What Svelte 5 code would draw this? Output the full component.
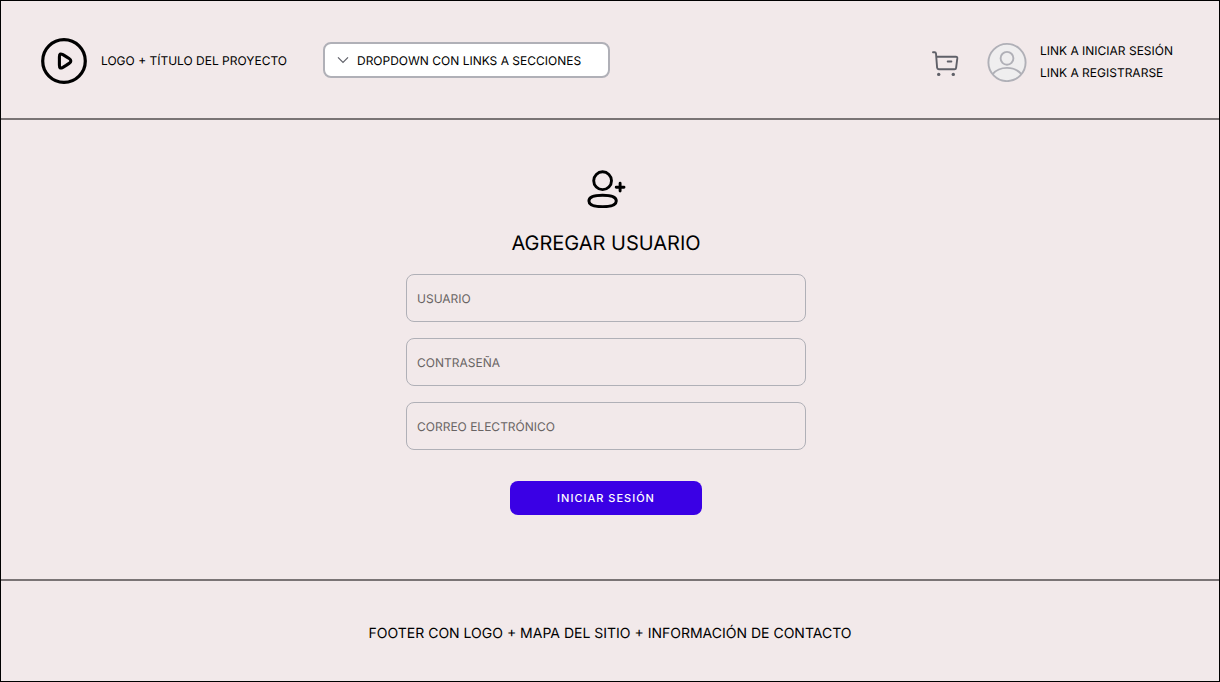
<script>
  const fields = [
    { name: 'usuario', text: 'USUARIO', type: 'text', auto: 'username' },
    { name: 'contrasena', text: 'CONTRASEÑA', type: 'password', auto: 'new-password' },
    { name: 'correo', text: 'CORREO ELECTRÓNICO', type: 'email', auto: 'email' }
  ];
</script>

<div class="page">
  <header>
    <a class="brand" href="#inicio">
      <svg width="46" height="46" viewBox="0 0 46 46" fill="none" stroke="#000" stroke-linejoin="round" aria-hidden="true">
        <circle cx="23" cy="23" r="21.3" stroke-width="3.2" />
        <path stroke-width="3.1" d="M18.400 23v-4c0-3.300.9-3.700 3.500-2.300l3.200 1.900 3 1.900c2.300 1.500 2.300 3.400 0 4.900l-3 2-3.200 1.900c-2.600 1.400-3.500.9-3.500-2.300z" />
      </svg>
      <span>LOGO + TÍTULO DEL PROYECTO</span>
    </a>

    <div class="dropdown">
      <select aria-label="Secciones">
        <option>DROPDOWN CON LINKS A SECCIONES</option>
      </select>
      <svg width="12" height="8" viewBox="0 0 12 8" fill="none" stroke="#5f6068" stroke-width="1.2" aria-hidden="true">
        <path d="M1 1.3l5 5 5-5" />
      </svg>
    </div>

    <div class="account">
      <a class="cart" href="#carrito" aria-label="Carrito">
        <svg width="28" height="34" viewBox="0 -6 28 34" fill="none" stroke="#5f6068" stroke-width="1.9" stroke-linecap="round" stroke-linejoin="round" aria-hidden="true">
          <path d="M2 2.2h1.6c.9 0 1.300.4 1.400 1.300L6.100 17.600c.1 1.100.7 1.600 1.700 1.600h15.700c.9 0 1.500-.5 1.600-1.400l1.200-9.400c.1-1-.4-1.600-1.400-1.600H5.400M16.700 11.500h3.700" />
          <circle cx="7.7" cy="24.4" r="1.7" fill="#5f6068" stroke="none" />
          <circle cx="22.3" cy="24.4" r="1.7" fill="#5f6068" stroke="none" />
        </svg>
      </a>
      <svg width="40" height="42" viewBox="0 0 40 42" fill="none" stroke="#b0b0b7" stroke-width="1.9" aria-hidden="true">
        <circle cx="20" cy="22.5" r="18.6" fill="#efeeef" />
        <circle cx="20" cy="18.3" r="6.4" />
        <path d="M5.6 34.2c3.3-4 8.400-6.300 14.400-6.300s11.100 2.300 14.400 6.300" />
      </svg>
      <nav>
        <a href="#iniciar">LINK A INICIAR SESIÓN</a>
        <a href="#registrarse">LINK A REGISTRARSE</a>
      </nav>
    </div>
  </header>

  <main>
    <svg width="40" height="38" viewBox="0 0 40 38" fill="none" stroke="#000" stroke-width="2.9" stroke-linecap="round" aria-hidden="true">
      <circle cx="16.600" cy="10.700" r="8.900" />
      <path d="M2.900 31c0-4.200 4.700-5.700 13.700-5.700s13.700 1.500 13.700 5.700-4.700 5.700-13.700 5.700S2.900 35.200 2.900 31z" />
      <path d="M30.200 17.200h7.800M34.100 13.300v7.800" />
    </svg>
    <h1>AGREGAR USUARIO</h1>
    <form onsubmit={(e) => e.preventDefault()}>
      {#each fields as f}
        <input type={f.type} name={f.name} placeholder={f.text} aria-label={f.text} autocomplete={f.auto} />
      {/each}
      <button type="submit">INICIAR SESIÓN</button>
    </form>
  </main>

  <footer>FOOTER CON LOGO + MAPA DEL SITIO + INFORMACIÓN DE CONTACTO</footer>
</div>

<style>
  .page,
  .page * {
    box-sizing: border-box;
    text-rendering: geometricPrecision;
  }

  .page {
    display: flex;
    flex-direction: column;
    min-height: 100vh;
    border: 1px solid #000;
    background: #f2e9ea;
    color: #000;
    font: 12px/22px Inter, sans-serif;
  }

  a {
    color: inherit;
    text-decoration: none;
  }

  svg {
    display: block;
    flex: none;
  }

  header {
    display: flex;
    align-items: center;
    padding: 37px 46px 34px 40px;
    border-bottom: 2px solid #7a7475;
  }

  .brand {
    display: flex;
    align-items: center;
    gap: 14px;
    margin-right: 36px;
  }

  .dropdown {
    position: relative;
    width: 287px;
    padding-bottom: 2px;
  }

  .dropdown svg {
    position: absolute;
    left: 14px;
    top: 14px;
    pointer-events: none;
  }

  select {
    display: block;
    appearance: none;
    width: 100%;
    height: 36px;
    padding: 2px 8px 0 32px;
    border: 2px solid #b0b0b7;
    border-radius: 8px;
    background: #fff;
    color: #000;
    font: inherit;
  }

  .account {
    display: flex;
    align-items: center;
    margin-left: auto;
  }

  .cart {
    margin-right: 28px;
  }

  nav {
    display: flex;
    flex-direction: column;
    margin-left: 13px;
    padding-top: 2px;
  }

  main {
    flex: 1;
    display: flex;
    flex-direction: column;
    align-items: center;
    padding: 50px 8px 64px 0;
  }

  h1 {
    margin: 23px 0 19px;
    font-size: 20px;
    font-weight: 400;
    line-height: 24px;
  }

  form {
    display: flex;
    flex-direction: column;
    align-items: center;
    gap: 16px;
    width: 100%;
    max-width: 400px;
  }

  input {
    width: 100%;
    height: 48px;
    padding: 0 10px;
    border: 1px solid #b0b0b7;
    border-radius: 8px;
    background: transparent;
    color: #000;
    font: inherit;
  }

  input::placeholder {
    color: #696464;
    opacity: 1;
  }

  button {
    height: 34px;
    width: 192px;
    margin-top: 15px;
    border: 0;
    border-radius: 8px;
    background: #3a00e5;
    color: #fff;
    font: 500 11px/16px Inter, sans-serif;
    letter-spacing: 1px;
  }

  footer {
    padding: 42px 16px 36px;
    border-top: 2px solid #7a7475;
    font-size: 14px;
    text-align: center;
  }
</style>
